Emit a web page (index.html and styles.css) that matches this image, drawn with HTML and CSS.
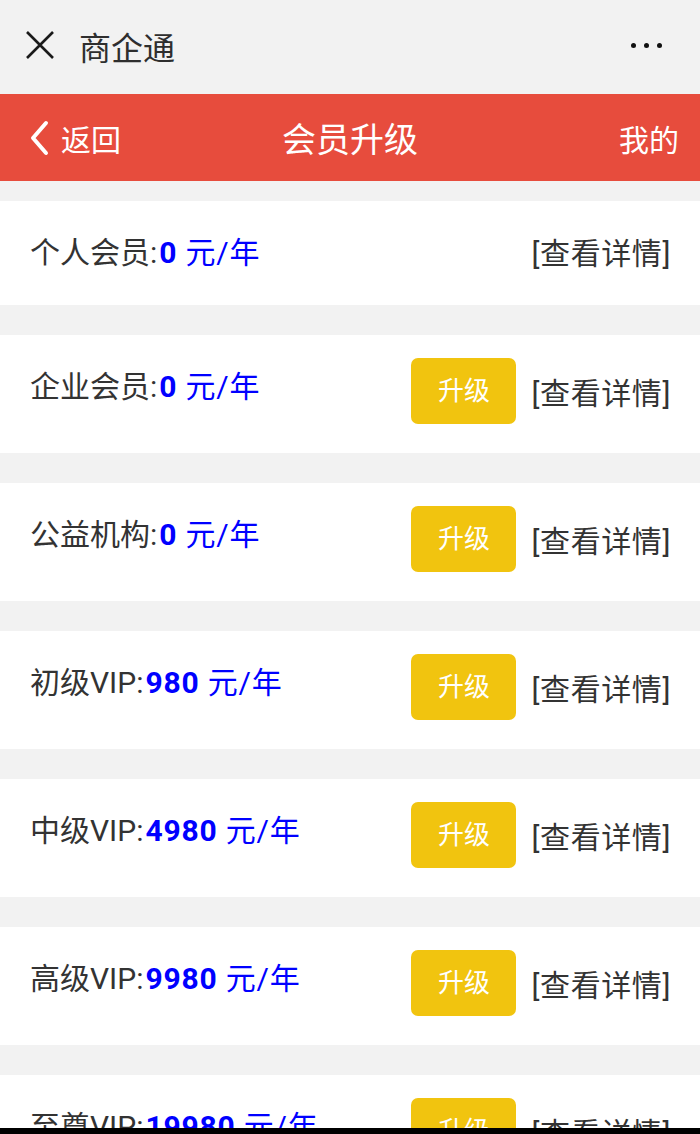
FILE: index.html
```html
<!DOCTYPE html>
<html lang="zh">
<head>
<meta charset="utf-8">
<title>商企通</title>
<link rel="stylesheet" href="styles.css">
</head>
<body>
<div class="topbar">
  <svg class="close" width="30" height="30" viewBox="0 0 30 30"><path d="M2 2 L28 28 M28 2 L2 28" stroke="#1a1a1a" stroke-width="2.6" fill="none"/></svg>
  <span class="apptitle">商企通</span>
  <span class="more"><i></i><i></i><i></i></span>
</div>
<div class="navbar">
  <div class="back">
    <svg width="22" height="36" viewBox="0 0 22 36"><path d="M18 3 L5 18 L18 33" stroke="#fff" stroke-width="4" stroke-linecap="round" stroke-linejoin="round" fill="none"/></svg>
    <span>返回</span>
  </div>
  <div class="navtitle">会员升级</div>
  <div class="mine">我的</div>
</div>
<div class="list">
  <div class="card card-short">
    <div class="name">个人会员:<span class="price"><b>0</b> 元/年</span></div>
    <div class="actions"><span class="detail">[查看详情]</span></div>
  </div>
  <div class="card">
    <div class="name">企业会员:<span class="price"><b>0</b> 元/年</span></div>
    <div class="actions"><span class="btn">升级</span><span class="detail">[查看详情]</span></div>
  </div>
  <div class="card">
    <div class="name">公益机构:<span class="price"><b>0</b> 元/年</span></div>
    <div class="actions"><span class="btn">升级</span><span class="detail">[查看详情]</span></div>
  </div>
  <div class="card">
    <div class="name">初级VIP:<span class="price"><b>980</b> 元/年</span></div>
    <div class="actions"><span class="btn">升级</span><span class="detail">[查看详情]</span></div>
  </div>
  <div class="card">
    <div class="name">中级VIP:<span class="price"><b>4980</b> 元/年</span></div>
    <div class="actions"><span class="btn">升级</span><span class="detail">[查看详情]</span></div>
  </div>
  <div class="card">
    <div class="name">高级VIP:<span class="price"><b>9980</b> 元/年</span></div>
    <div class="actions"><span class="btn">升级</span><span class="detail">[查看详情]</span></div>
  </div>
  <div class="card">
    <div class="name">至尊VIP:<span class="price"><b>19980</b> 元/年</span></div>
    <div class="actions"><span class="btn">升级</span><span class="detail">[查看详情]</span></div>
  </div>
</div>
<div class="sysbar"></div>
</body>
</html>
```
FILE: styles.css
```css
html, body {
  margin: 0;
  padding: 0;
  background: #f2f2f2;
  font-family: Roboto, "Noto Sans CJK SC", sans-serif;
  color: #333;
  overflow: hidden;
  height: 1134px;
}
.topbar {
  height: 94px;
  display: flex;
  align-items: center;
  padding: 0 38px 0 25px;
  box-sizing: border-box;
  background: #f2f2f2;
}
.close { flex: none; margin-top: -4px; }
.apptitle {
  margin-left: 24px;
  font-size: 32px;
  color: #2e2e2e;
  flex: 1;
  margin-top: -2px;
}
.more { display: flex; gap: 8px; margin-top: -4px; }
.more i {
  width: 5px; height: 5px; border-radius: 50%;
  background: #111; display: block;
}
.navbar {
  height: 87px;
  background: #e74c3d;
  display: flex;
  align-items: center;
  justify-content: space-between;
  padding: 0 21px 0 28px;
  color: #fff;
  position: relative;
}
.back { display: flex; align-items: center; font-size: 30px; gap: 11px; }
.back svg { display: block; }
.navtitle {
  position: absolute;
  left: 0; right: 0;
  text-align: center;
  font-size: 34px;
  pointer-events: none;
}
.mine { font-size: 30px; }
.list {
  padding-top: 20px;
  display: flex;
  flex-direction: column;
  gap: 30px;
}
.card {
  background: #fff;
  height: 118px;
  box-sizing: border-box;
  padding: 24px 30px 0 30px;
  display: flex;
  justify-content: space-between;
  align-items: flex-start;
}
.card-short { height: 104px; }
.name {
  font-size: 30px;
  line-height: 56px;
  color: #333;
}
.price { color: #0000ff; margin-left: 2px; letter-spacing: 0.8px; }
.price b { font-weight: 700; }
.actions {
  display: flex;
  align-items: center;
  height: 54px;
  margin-top: -1px;
}
.card:not(.card-short) .actions { height: 66px; margin-top: -1px; }
.btn {
  width: 105px;
  height: 66px;
  background: #f1c40f;
  color: #fff;
  border-radius: 7px;
  display: flex;
  align-items: center;
  justify-content: center;
  font-size: 26px;
  margin-right: 15px;
  padding-bottom: 6px;
  box-sizing: border-box;
}
.detail { font-size: 30px; color: #333; letter-spacing: 0.6px; margin-right: -1px; }
.sysbar {
  position: fixed;
  left: 0; right: 0; bottom: 0;
  height: 6px;
  background: #000;
}
```
